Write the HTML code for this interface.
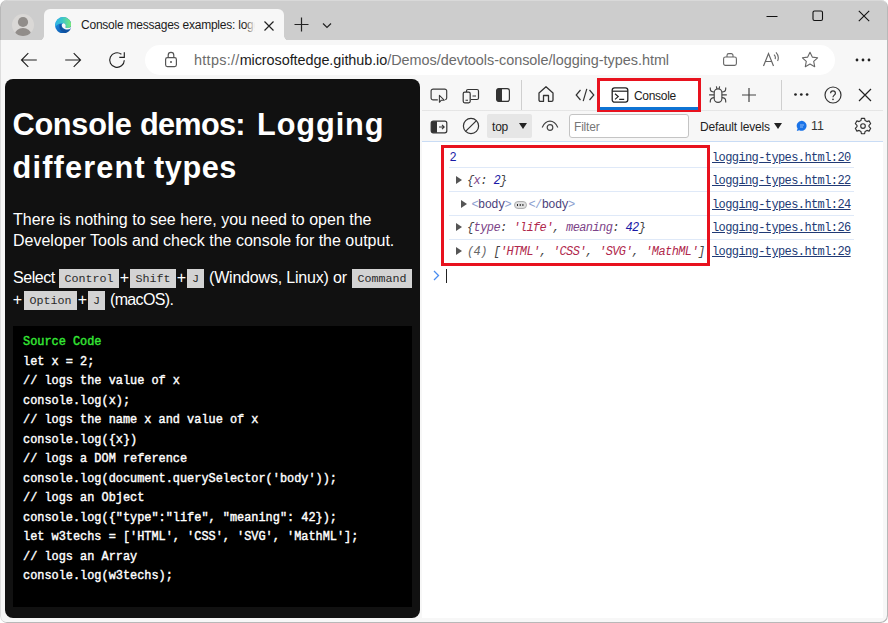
<!DOCTYPE html>
<html>
<head>
<meta charset="utf-8">
<title>Console messages examples</title>
<style>
*{box-sizing:border-box;margin:0;padding:0}
html,body{width:888px;height:623px;overflow:hidden;background:#fff;font-family:"Liberation Sans",sans-serif;}
.abs{position:absolute}
#win{position:absolute;left:0;top:0;width:888px;height:623px;background:#f7f7f7;overflow:hidden;border-radius:7px}
#winedge{position:absolute;left:0;top:0;width:888px;height:623px;border-radius:7px;box-shadow:inset -1px -1px 0 #b8b8b8,inset 1px 0 0 rgba(0,0,0,0.10),inset 0 1px 0 rgba(255,255,255,0.25);pointer-events:none}
#tabbar{position:absolute;left:0;top:0;width:888px;height:40.5px;background:#cdcdcd}
#tab{position:absolute;left:44px;top:9px;width:240px;height:32px;background:#f7f7f7;border-radius:6px 6px 0 0}
#tab:before,#tab:after{content:"";position:absolute;bottom:0.5px;width:5px;height:5px}
#tab:before{left:-5px;background:radial-gradient(circle at 0 0,rgba(247,247,247,0) 4.5px,#f7f7f7 5px)}
#tab:after{right:-5px;background:radial-gradient(circle at 100% 0,rgba(247,247,247,0) 4.5px,#f7f7f7 5px)}
#tabtitle{position:absolute;left:81px;top:17.5px;font-size:12px;letter-spacing:-0.23px;color:#1b1b1b;white-space:nowrap;width:173.5px;overflow:hidden}
#tabfade{position:absolute;left:245px;top:14px;width:10px;height:22px;background:linear-gradient(90deg,rgba(247,247,247,0),#f7f7f7)}
#toolbar{position:absolute;left:0;top:40px;width:888px;height:39px;background:#f7f7f7}
#urlpill{position:absolute;left:145px;top:45px;width:690px;height:30px;border-radius:15px;background:#fff}
#url{position:absolute;left:194px;top:52px;font-size:14.42px;color:#6b6b6b;white-space:nowrap}
#url b{font-weight:normal;color:#1b1b1b}
#page{position:absolute;left:5px;top:79px;width:415px;height:539px;background:#111;border-radius:8px;color:#fff}
.h{position:absolute;font-size:30.7px;font-weight:bold;color:#fff;line-height:42.5px;white-space:nowrap}
.p{position:absolute;left:13px;font-size:16px;color:#fff;line-height:21px;white-space:nowrap}
.kb{position:absolute;height:19px;font-family:"Liberation Mono",monospace;font-size:11.7px;line-height:20px;background:#d3d3d3;color:#2a2a2a;text-align:center;white-space:nowrap}
.pl{width:11px;text-align:center}
#pre{position:absolute;left:13px;top:326px;width:399px;height:281px;background:#000}
#code{position:absolute;left:23px;top:333px;font-family:"Liberation Mono",monospace;font-weight:normal;-webkit-text-stroke:0.4px currentColor;font-size:11.9px;line-height:19.5px;color:#fff;white-space:pre}
#code .g{color:#35e835}
#dt{position:absolute;left:422px;top:79px;width:461px;height:539px;background:#fff}
#dtbar1{position:absolute;left:422px;top:79px;width:461px;height:32px;background:linear-gradient(#f7f7f7 0,#f7f7f7 30.5px,#dfdfdf 31px,#ececec 32px)}
#dtbar2{position:absolute;left:422px;top:111px;width:461px;height:31px;background:#f7f7f7;border-bottom:1px solid #c9dcf5}
.mono{font-family:"Liberation Mono",monospace}
.row{position:absolute;left:449px;width:405px;height:1px;background:#dfe9f8}
.msg{position:absolute;font-family:"Liberation Mono",monospace;font-size:12px;letter-spacing:-0.6px;white-space:nowrap;line-height:12px}
.lnk{position:absolute;left:712px;font-family:"Liberation Mono",monospace;font-size:12px;letter-spacing:-0.6px;color:#213a75;text-decoration:underline;white-space:nowrap;line-height:12px}
.tri{position:absolute;width:0;height:0;border-left:6px solid #555;border-top:4px solid transparent;border-bottom:4px solid transparent}
.redbox{position:absolute;border:3px solid #e8121e}
</style>
</head>
<body>
<div id="win">
 <div id="tabbar"></div>
 <div id="tab"></div>
 <!-- profile -->
 <svg class="abs" style="left:11px;top:13px" width="24" height="24" viewBox="11 13 24 24"><defs><clipPath id="pc"><circle cx="23" cy="25" r="11"/></clipPath></defs><circle cx="23" cy="25" r="11" fill="#dad8d6"/><circle cx="23" cy="22" r="5.1" fill="#918d8a"/><ellipse cx="23" cy="34.6" rx="8.2" ry="6.6" fill="#918d8a" clip-path="url(#pc)"/></svg>
 <!-- edge logo -->
 <svg class="abs" style="left:54.8px;top:16.8px" width="16.4" height="16.4" viewBox="0 0 16 16"><defs>
<linearGradient id="eg1" x1="0" y1="0" x2="1" y2="0"><stop offset="0" stop-color="#2fb4e6"/><stop offset="0.45" stop-color="#3cc6c8"/><stop offset="1" stop-color="#7aeb76"/></linearGradient>
<linearGradient id="eg2" x1="0" y1="0" x2="0.6" y2="1"><stop offset="0" stop-color="#2a9fe6"/><stop offset="0.6" stop-color="#1574cc"/><stop offset="1" stop-color="#0d55a5"/></linearGradient>
<clipPath id="ec"><circle cx="8" cy="8" r="8"/></clipPath></defs>
<g clip-path="url(#ec)">
<rect width="16" height="16" fill="url(#eg2)"/>
<path d="M4.6 6.8C3.6 9.6 4.8 13.6 8.6 14.9C11.6 15.7 14.2 14.2 15.4 12.1C13.2 13.1 10.6 13.2 8.6 12C6.6 10.8 6 9 6.4 7.4Z" fill="#10519f"/>
<path d="M0.3 6.2C1 2.2 4.5 0 8.3 0C13 0 16 3.6 16 7.4C16 9.8 14 10.8 11.6 10.8C10.4 10.8 9.9 10.4 10.3 9.6C10.9 8.2 10.2 6.3 8 6.1C5.2 5.9 2.2 6.9 0.2 9.6C0 8.4 0.1 7.2 0.3 6.2Z" fill="url(#eg1)"/>
<path d="M10.3 9.6C9.9 10.4 10.4 10.8 11.6 10.8C13.4 10.8 15 10.3 15.8 9.2L15.7 11.2C14 12.3 11.4 12.5 9.4 11.6C7.4 10.6 6.3 9 6.7 7.6C7 6.6 7.7 6.1 8.2 6.1C10.2 6.3 10.9 8.2 10.3 9.6Z" fill="#f7f7f7"/>
</g></svg>
 <div id="tabtitle">Console messages examples: loggi</div><div id="tabfade"></div>
 <svg class="abs" style="left:262.5px;top:19.5px" width="12" height="12" viewBox="0 0 12 12"><path d="M1.5 1.5L10.5 10.5M10.5 1.5L1.5 10.5" stroke="#222" stroke-width="1.2" fill="none"/></svg>
 <svg class="abs" style="left:294px;top:17px" width="15" height="15" viewBox="0 0 15 15"><path d="M7.5 0.5V14.5M0.5 7.5H14.5" stroke="#222" stroke-width="1.2" fill="none"/></svg>
 <svg class="abs" style="left:322px;top:22px" width="10" height="7" viewBox="0 0 10 7"><path d="M1 1.5L5 5.5L9 1.5" stroke="#222" stroke-width="1.2" fill="none"/></svg>
 <!-- window controls -->
 <svg class="abs" style="left:766px;top:10px" width="12" height="12" viewBox="0 0 12 12"><path d="M0.5 6.5H11.5" stroke="#111" stroke-width="1.1"/></svg>
 <svg class="abs" style="left:812px;top:10px" width="12" height="12" viewBox="0 0 12 12"><rect x="1" y="1" width="9.5" height="9.5" rx="1.5" fill="none" stroke="#111" stroke-width="1.1"/></svg>
 <svg class="abs" style="left:858px;top:10px" width="12" height="12" viewBox="0 0 12 12"><path d="M0.8 0.8L11.2 11.2M11.2 0.8L0.8 11.2" stroke="#111" stroke-width="1.1"/></svg>

 <div id="toolbar"></div>
 <div id="urlpill"></div>
 <!-- nav icons -->
 <svg class="abs" style="left:20px;top:51px" width="18" height="18" viewBox="0 0 18 18"><path d="M16.8 9H2M8.3 2.2L1.5 9L8.3 15.8" stroke="#222" stroke-width="1.15" fill="none"/></svg>
 <svg class="abs" style="left:64px;top:51px" width="18" height="18" viewBox="0 0 18 18"><path d="M1.2 9H16M9.7 2.2L16.5 9L9.7 15.8" stroke="#222" stroke-width="1.15" fill="none"/></svg>
 <svg class="abs" style="left:108px;top:51px" width="18" height="18" viewBox="0 0 18 18"><path d="M16.3 9.2A7.3 7.3 0 1 1 13.4 3.2" stroke="#222" stroke-width="1.15" fill="none"/><path d="M16.3 1.3V6.3H11.3" stroke="#222" stroke-width="1.15" fill="none"/></svg>
 <!-- lock -->
 <svg class="abs" style="left:164px;top:50.5px" width="14" height="17" viewBox="0 0 14 17"><rect x="1.6" y="6.6" width="10.8" height="9" rx="1.8" fill="none" stroke="#555" stroke-width="1.2"/><path d="M4.2 6.5V4.2A2.8 2.8 0 0 1 9.8 4.2V6.5" fill="none" stroke="#555" stroke-width="1.2"/><circle cx="7" cy="11" r="1" fill="#555"/></svg>
 <div id="url"><span style="letter-spacing:0.3px">https://</span><b style="letter-spacing:-0.06px">microsoftedge.github.io</b><span style="letter-spacing:-0.02px">/Demos/devtools-console/logging-types.html</span></div>
 <!-- right url icons -->
 <svg class="abs" style="left:722px;top:52px" width="16" height="15" viewBox="0 0 16 15"><rect x="1.6" y="5" width="12.8" height="8.4" rx="1.8" fill="none" stroke="#666" stroke-width="1.1"/><path d="M5 5V3.4A1.8 1.8 0 0 1 6.8 1.6H9.2A1.8 1.8 0 0 1 11 3.4V5" fill="none" stroke="#666" stroke-width="1.1"/></svg>
 <svg class="abs" style="left:762px;top:51px" width="18" height="17" viewBox="0 0 18 17"><path d="M1.5 15L6.5 2.5L11.5 15M3.3 10.5H9.7" fill="none" stroke="#666" stroke-width="1.2"/><path d="M12 3.6Q14 5.4 13.1 8.2M14 1.4Q17.6 5.4 15.6 10" fill="none" stroke="#666" stroke-width="1.1"/></svg>
 <svg class="abs" style="left:801px;top:51px" width="18" height="17" viewBox="0 0 18 17"><path d="M9 1.3L11.3 6.1L16.6 6.8L12.7 10.4L13.7 15.7L9 13.1L4.3 15.7L5.3 10.4L1.4 6.8L6.7 6.1Z" fill="none" stroke="#666" stroke-width="1.1" stroke-linejoin="round"/></svg>
 <svg class="abs" style="left:855px;top:58px" width="16" height="4" viewBox="0 0 16 4"><circle cx="2" cy="2" r="1.4" fill="#222"/><circle cx="8" cy="2" r="1.4" fill="#222"/><circle cx="14" cy="2" r="1.4" fill="#222"/></svg>

 <!-- page -->
 <div id="page"></div>
 <div class="h" style="left:12.5px;top:103.5px;letter-spacing:-0.27px">Console</div>
 <div class="h" style="left:140px;top:103.5px;letter-spacing:-0.72px">demos:</div>
 <div class="h" style="left:257px;top:103.5px;letter-spacing:0.92px">Logging</div>
 <div class="h" style="left:12.5px;top:147px;letter-spacing:1.19px">different</div>
 <div class="h" style="left:154px;top:147px;letter-spacing:0.55px">types</div>
 <div class="p" style="top:209px">There is nothing to see here, you need to open the<br>Developer Tools and check the console for the output.</div>
 <div class="p" style="top:267px;letter-spacing:-0.45px">Select</div>
 <div class="kb" style="left:59px;top:269px;width:60px">Control</div>
 <div class="p pl" style="left:119px;top:267px">+</div>
 <div class="kb" style="left:130px;top:269px;width:46px">Shift</div>
 <div class="p pl" style="left:176px;top:267px">+</div>
 <div class="kb" style="left:187px;top:269px;width:17px">J</div>
 <div class="p" style="left:209px;top:267px;letter-spacing:-0.19px">(Windows, Linux) or</div>
 <div class="kb" style="left:352px;top:269px;width:60px">Command</div>
 <div class="p pl" style="left:12px;top:289px">+</div>
 <div class="kb" style="left:24px;top:291px;width:53px">Option</div>
 <div class="p pl" style="left:77px;top:289px">+</div>
 <div class="kb" style="left:88px;top:291px;width:17px">J</div>
 <div class="p" style="left:110px;top:289px;letter-spacing:-0.65px">(macOS).</div>
 <div id="pre"></div>
 <div id="code"><span class="g">Source Code</span>
let x = 2;
// logs the value of x
console.log(x);
// logs the name x and value of x
console.log({x})
// logs a DOM reference
console.log(document.querySelector('body'));
// logs an Object
console.log({"type":"life", "meaning": 42});
let w3techs = ['HTML', 'CSS', 'SVG', 'MathML'];
// logs an Array
console.log(w3techs);</div>

 <!-- devtools -->
 <div id="dt"></div>
 <div id="dtbar1"></div>
 <div id="dtbar2"></div>

 <!-- toolbar row 1 icons -->
 <svg class="abs" style="left:430px;top:88px" width="18" height="16" viewBox="0 0 18 16"><path d="M7.8 11.9H3.1A2 2 0 0 1 1.1 9.9V3.1A2 2 0 0 1 3.1 1.1H14.7A2 2 0 0 1 16.7 3.1V9.9A2 2 0 0 1 15.2 11.8" fill="none" stroke="#3a3a3a" stroke-width="1.15"/><path d="M9.4 7.3V14.3L11.3 12.2H14.2Z" fill="none" stroke="#3a3a3a" stroke-width="1.05" stroke-linejoin="round"/></svg>
 <svg class="abs" style="left:462px;top:88px" width="18" height="16" viewBox="0 0 18 16"><path d="M4.5 4V3A1.5 1.5 0 0 1 6 1.5H15A1.5 1.5 0 0 1 16.5 3V10A1.5 1.5 0 0 1 15 11.5H9" fill="none" stroke="#333" stroke-width="1.2"/><rect x="1.2" y="4.2" width="7" height="10.6" rx="1.5" fill="none" stroke="#333" stroke-width="1.2"/><path d="M3.5 12.3H6M10.5 8H14" stroke="#333" stroke-width="1.1"/></svg>
 <svg class="abs" style="left:495px;top:87px" width="16" height="16" viewBox="0 0 16 16"><rect x="1.6" y="1.6" width="12.8" height="12.8" rx="2.2" fill="none" stroke="#333" stroke-width="1.2"/><path d="M3.5 1.6H7V14.4H3.5A1.9 1.9 0 0 1 1.6 12.5V3.5A1.9 1.9 0 0 1 3.5 1.6Z" fill="#333"/></svg>
 <div class="abs" style="left:521px;top:80px;width:1px;height:30px;background:#cfcfcf"></div>
 <svg class="abs" style="left:537px;top:85px" width="18" height="18" viewBox="0 0 18 18"><path d="M2 8L9 1.8L16 8V15A1.4 1.4 0 0 1 14.6 16.4H11.5V10.5H6.5V16.4H3.4A1.4 1.4 0 0 1 2 15Z" fill="none" stroke="#333" stroke-width="1.3" stroke-linejoin="round"/></svg>
 <svg class="abs" style="left:575px;top:88px" width="20" height="14" viewBox="0 0 20 14"><path d="M5.5 2L1.2 7L5.5 12M14.5 2L18.8 7L14.5 12M11.8 0.8L8.2 13.2" fill="none" stroke="#333" stroke-width="1.2"/></svg>
 <div class="abs" style="left:598px;top:79px;width:102px;height:31px;background:#fff"></div>
 <svg class="abs" style="left:611px;top:86px" width="18" height="18" viewBox="0 0 18 18"><rect x="1.2" y="1.8" width="15.6" height="14.4" rx="2.4" fill="none" stroke="#222" stroke-width="1.3"/><path d="M1.2 5.2H16.8" stroke="#222" stroke-width="1.2"/><path d="M4 7.8L7.2 10.6L4 13.4M8.2 13.4H13.2" fill="none" stroke="#222" stroke-width="1.2"/></svg>
 <div class="abs" style="left:634px;top:89px;font-size:12px;letter-spacing:-0.3px;color:#1b1b1b;white-space:nowrap">Console</div>
 <svg class="abs" style="left:708px;top:85px" width="20" height="19" viewBox="0 0 20 19"><g fill="none" stroke="#444" stroke-width="1.15"><rect x="6.2" y="3.9" width="7.7" height="13.5" rx="3.8"/><path d="M8.4 1.3L8.9 3.8M11.6 1.3L11.1 3.8M2.3 2.5V4C2.3 6 4 7 6.2 7M17.7 2.5V4C17.7 6 16 7 13.9 7M1.1 9.9H6.2M13.9 9.9H18.8M6.2 12.6C4 12.6 2.3 13.8 2.3 16V17.6M13.9 12.6C16 12.6 17.7 13.8 17.7 16V17.6"/></g></svg>
 <svg class="abs" style="left:741px;top:87px" width="16" height="16" viewBox="0 0 16 16"><path d="M8 1V15M1 8H15" stroke="#444" stroke-width="1.2"/></svg>
 <div class="abs" style="left:781px;top:80px;width:1px;height:30px;background:#cfcfcf"></div>
 <svg class="abs" style="left:793px;top:92.3px" width="17" height="5" viewBox="0 0 17 5"><circle cx="2.5" cy="2.5" r="1.35" fill="#222"/><circle cx="8.3" cy="2.5" r="1.35" fill="#222"/><circle cx="14.1" cy="2.5" r="1.35" fill="#222"/></svg>
 <svg class="abs" style="left:824px;top:86px" width="18" height="18" viewBox="0 0 18 18"><circle cx="9" cy="9" r="8" fill="none" stroke="#333" stroke-width="1.2"/><path d="M6.6 7.2A2.4 2.4 0 0 1 11.4 7.2C11.4 9 9 9.2 9 11.2" fill="none" stroke="#333" stroke-width="1.2"/><circle cx="9" cy="13.3" r="0.85" fill="#333"/></svg>
 <svg class="abs" style="left:858px;top:88px" width="14" height="14" viewBox="0 0 14 14"><path d="M1 1L13 13M13 1L1 13" stroke="#222" stroke-width="1.2"/></svg>
 <div class="redbox" style="left:597px;top:78px;width:104px;height:34px"></div>
 <div class="abs" style="left:600px;top:107px;width:98px;height:3px;background:#0f74d4"></div>

 <!-- toolbar row 2 -->
 <svg class="abs" style="left:430px;top:119.5px" width="18" height="14" viewBox="0 0 18 14"><rect x="1.2" y="1.2" width="15.6" height="11.6" rx="2" fill="none" stroke="#333" stroke-width="1.2"/><path d="M3 1.2H7V12.8H3A1.8 1.8 0 0 1 1.2 11V3A1.8 1.8 0 0 1 3 1.2Z" fill="#333"/><path d="M9 7H14M12 4.8L14.2 7L12 9.2" fill="none" stroke="#333" stroke-width="1.1"/></svg>
 <svg class="abs" style="left:462px;top:117px" width="18" height="18" viewBox="0 0 18 18"><circle cx="9" cy="9" r="7.6" fill="none" stroke="#333" stroke-width="1.2"/><path d="M3.8 14.2L14.2 3.8" stroke="#333" stroke-width="1.2"/></svg>
 <div class="abs" style="left:487px;top:114px;width:45px;height:24px;background:#e6e6e6;border-radius:2px"></div>
 <div class="abs" style="left:492px;top:120px;font-size:12px;letter-spacing:-0.2px;color:#222">top</div>
 <div class="abs" style="left:519.3px;top:122.6px;width:0;height:0;border-top:6px solid #222;border-left:4.2px solid transparent;border-right:4.2px solid transparent"></div>
 <svg class="abs" style="left:541px;top:119px" width="18" height="14" viewBox="0 0 18 14"><path d="M1.2 8.5Q4 2.2 9 2.2Q14 2.2 16.8 8.5" fill="none" stroke="#444" stroke-width="1.2"/><circle cx="9" cy="8.5" r="2.8" fill="none" stroke="#444" stroke-width="1.2"/></svg>
 <div class="abs" style="left:569px;top:114px;width:120px;height:24px;background:#fff;border:1px solid #c4c4c4;border-radius:3px"></div>
 <div class="abs" style="left:574px;top:120px;font-size:12px;letter-spacing:-0.2px;color:#777">Filter</div>
 <div class="abs" style="left:700px;top:120px;font-size:12px;letter-spacing:-0.15px;color:#222;white-space:nowrap">Default levels</div>
 <div class="abs" style="left:774px;top:122.6px;width:0;height:0;border-top:6px solid #222;border-left:4.2px solid transparent;border-right:4.2px solid transparent"></div>
 <svg class="abs" style="left:796px;top:120px" width="12" height="12" viewBox="0 0 12 12"><path d="M6 0.8A5 5 0 1 1 3.2 10.2L0.8 11L1.6 8.6A5 5 0 0 1 6 0.8Z" fill="#1a73e8"/><path d="M4 5H8M4 7H7" stroke="#9cc3f7" stroke-width="0.9"/></svg>
 <div class="abs" style="left:811px;top:119px;font-size:12.4px;color:#333">11</div>
 <svg class="abs" style="left:854px;top:117px" width="18" height="18" viewBox="0 0 18 18"><path d="M7.4 1.3H10.6L11.1 3.6L12.9 4.6L15.1 3.9L16.7 6.7L15 8.3V9.7L16.7 11.3L15.1 14.1L12.9 13.4L11.1 14.4L10.6 16.7H7.4L6.9 14.4L5.1 13.4L2.9 14.1L1.3 11.3L3 9.7V8.3L1.3 6.7L2.9 3.9L5.1 4.6L6.9 3.6Z" fill="none" stroke="#333" stroke-width="1.15" stroke-linejoin="round"/><circle cx="9" cy="9" r="2.3" fill="none" stroke="#333" stroke-width="1.15"/></svg>

 <!-- console rows -->
 <div class="row" style="top:167px"></div>
 <div class="row" style="top:191px"></div>
 <div class="row" style="top:215px"></div>
 <div class="row" style="top:239px"></div>
 <div class="msg" style="left:449.5px;top:152.1px;color:#1a1aa6">2</div>
 <div class="tri" style="left:455.5px;top:176px"></div>
 <div class="msg" style="left:467px;top:175.1px;font-style:italic;color:#444">{<span style="color:#7d4488">x</span>: <span style="color:#1a1aa6">2</span>}</div>
 <div class="tri" style="left:461px;top:200px"></div>
 <div class="msg" style="left:471.5px;top:199.1px"><span style="color:#8d9fcf">&lt;</span><span style="color:#4b3f7a">body</span><span style="color:#8d9fcf">&gt;</span></div>
 <div class="abs" style="left:513.5px;top:200.8px;width:13.5px;height:8px;border-radius:4px;background:#dedede;border:1px solid #b0b0b0"></div>
 <div class="abs" style="left:516.8px;top:204.1px;width:1.7px;height:1.7px;background:#222;box-shadow:2.7px 0 0 #222,5.4px 0 0 #222"></div>
 <div class="msg" style="left:528.5px;top:199.1px"><span style="color:#8d9fcf">&lt;/</span><span style="color:#4b3f7a">body</span><span style="color:#8d9fcf">&gt;</span></div>
 <div class="tri" style="left:455.5px;top:223px"></div>
 <div class="msg" style="left:467px;top:222.1px;font-style:italic;color:#444">{<span style="color:#7d4488">type</span>: <span style="color:#b0284c">'life'</span>, <span style="color:#7d4488">meaning</span>: <span style="color:#1a1aa6">42</span>}</div>
 <div class="tri" style="left:455.5px;top:247px"></div>
 <div class="msg" style="left:467px;top:246.1px;font-style:italic;color:#444"><span style="color:#666">(4)</span> [<span style="color:#b0284c">'HTML'</span>, <span style="color:#b0284c">'CSS'</span>, <span style="color:#b0284c">'SVG'</span>, <span style="color:#b0284c">'MathML'</span>]</div>
 <div class="lnk" style="top:152.1px">logging-types.html:20</div>
 <div class="lnk" style="top:175.1px">logging-types.html:22</div>
 <div class="lnk" style="top:199.1px">logging-types.html:24</div>
 <div class="lnk" style="top:222.1px">logging-types.html:26</div>
 <div class="lnk" style="top:246.1px">logging-types.html:29</div>
 <div class="redbox" style="left:441px;top:145px;width:269px;height:121px"></div>
 <svg class="abs" style="left:433px;top:270px" width="7" height="11" viewBox="0 0 7 11"><path d="M1 1L5.5 5.5L1 10" fill="none" stroke="#4a8df0" stroke-width="1.3"/></svg>
 <div class="abs" style="left:446px;top:269px;width:1px;height:14px;background:#222"></div>
 <div id="winedge"></div>
</div>
</body>
</html>
